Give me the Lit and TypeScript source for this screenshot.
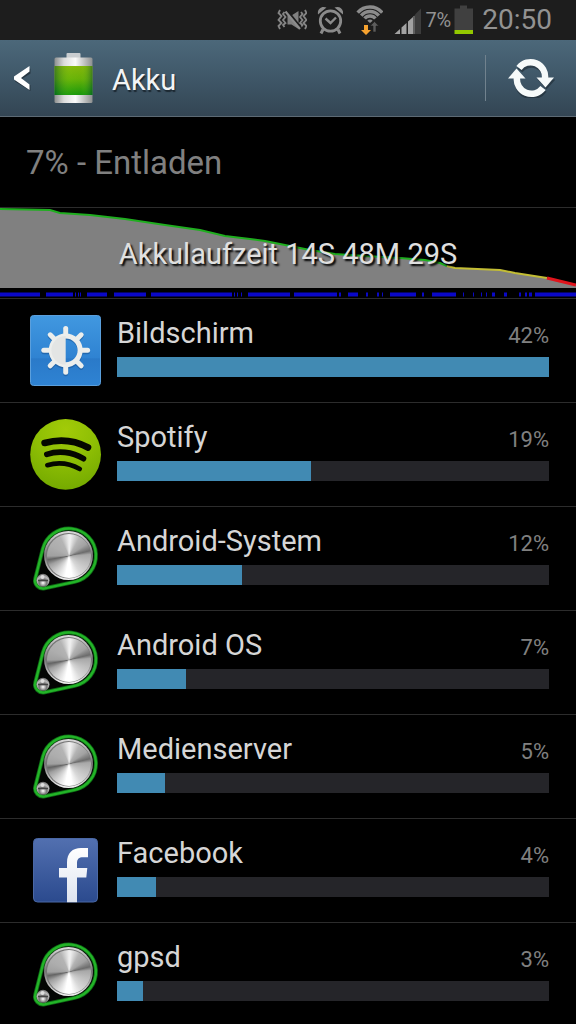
import { LitElement, html, css, svg } from "lit";
import { customElement, property } from "lit/decorators.js";
import { styleMap } from "lit/directives/style-map.js";

type IconName = "display" | "spotify" | "system" | "facebook";

interface Consumer {
  name: string;
  icon: IconName;
  percent: number;
  fill: number;
}

const CONSUMERS: Consumer[] = [
  { name: "Bildschirm", icon: "display", percent: 42, fill: 100 },
  { name: "Spotify", icon: "spotify", percent: 19, fill: 45 },
  { name: "Android-System", icon: "system", percent: 12, fill: 29 },
  { name: "Android OS", icon: "system", percent: 7, fill: 16 },
  { name: "Medienserver", icon: "system", percent: 5, fill: 11 },
  { name: "Facebook", icon: "facebook", percent: 4, fill: 9 },
  { name: "gpsd", icon: "system", percent: 3, fill: 6 },
];

/* Start and end of each period in which the device was awake. */
const AWAKE: [number, number][] = [
  [0, 40], [46, 73], [75, 76], [78, 79], [80, 81], [87, 107], [114, 146],
  [151, 232], [234, 235], [237, 238], [241, 242], [248, 290], [294, 337],
  [339, 341], [348, 358], [366, 368], [377, 379], [382, 383], [390, 416],
  [422, 424], [432, 456], [463, 464], [473, 474], [481, 482], [486, 487],
  [492, 495], [504, 507], [519, 521], [525, 527], [529, 532], [535, 576],
];

@customElement("app-icon")
class AppIcon extends LitElement {
  @property() name: IconName = "system";

  static styles = css`
    :host { display: block; width: 72px; height: 72px; }
    svg { display: block; width: 100%; height: 100%; }
    .metal {
      width: 100%;
      height: 100%;
      border-radius: 50%;
      background: conic-gradient(#eee 0deg, #eee 5deg, #b4b4b4 30deg, #a2a2a2 55deg, #6c6c6c 76deg,
        #a8a8a8 86deg, #bdbdbd 110deg, #d8d8d8 145deg, #fff 172deg, #fff 190deg, #c6c6c6 225deg,
        #a0a0a0 245deg, #646464 260deg, #a0a0a0 270deg, #adadad 300deg, #b4b4b4 335deg, #eee 360deg);
    }
  `;

  private display() {
    return svg`
      <defs>
        <linearGradient id="bg" x2="0" y2="1">
          <stop offset="0" stop-color="#4198e0"/><stop offset=".6" stop-color="#2f83d2"/>
          <stop offset=".62" stop-color="#2a7ac9"/><stop offset="1" stop-color="#2f83d3"/>
        </linearGradient>
      </defs>
      <rect x="0.5" y="0.5" width="70" height="70" rx="3" fill="url(#bg)" stroke="#5b9fdc"/>
      <g transform="translate(0 1.5)" stroke="#174f8d" opacity=".5" stroke-width="5" stroke-linecap="round" fill="none">
        <circle cx="35.7" cy="35.3" r="14.5"/>
        ${this.rays()}
      </g>
      <g stroke="#eceeec" stroke-width="5" stroke-linecap="round" fill="none">
        <circle cx="35.7" cy="35.3" r="14.4"/>
        ${this.rays()}
      </g>
      <path d="M35.7 21v28.600a14.300 14.300 0 0 1 0-28.600z" fill="#e3e5e4"/>`;
  }

  private rays() {
    return [0, 45, 90, 135, 180, 225, 270, 315].map(
      (a) => svg`<path d="M35.7 19v-5.600" transform=${`rotate(${a} 35.7 35.3)`}/>`
    );
  }

  private spotify() {
    return svg`
      <defs>
        <radialGradient id="bg" cx=".5" cy=".15" r=".9">
          <stop offset="0" stop-color="#a2cb08"/><stop offset=".5" stop-color="#8dbe04"/>
          <stop offset="1" stop-color="#72a800"/>
        </radialGradient>
      </defs>
      <circle cx="35.6" cy="35.4" r="35.400" fill="url(#bg)"/>
      <g fill="none" stroke="#050800" stroke-linecap="round">
        <path d="M14.600 24C29 20 45 21.500 58 28.500" stroke-width="6.600"/>
        <path d="M16.800 35.300C28 31.500 42 32.500 53.500 39.700" stroke-width="5.600"/>
        <path d="M17.300 46.200C28 43 39 44 49.800 50" stroke-width="4.600"/>
      </g>`;
  }

  private facebook() {
    return svg`
      <defs>
        <linearGradient id="bg" x2="0" y2="1">
          <stop offset="0" stop-color="#5270b0"/><stop offset="1" stop-color="#2b4a8e"/>
        </linearGradient>
        <linearGradient id="f" x2="0" y2="1">
          <stop offset="0" stop-color="#fff"/><stop offset="1" stop-color="#dde3ef"/>
        </linearGradient>
      </defs>
      <rect x="3.500" y="3.500" width="64" height="63.500" rx="4" fill="url(#bg)" stroke="#4a68a5"/>
      <path d="M37 67.300V42.500H29V33h8V27.500C37 18 42.500 13 51 13h7v9.300h-5c-4 0-6 1.700-6 5.700v5h10.300l-1 9.500H47v24.800z" fill="url(#f)"/>`;
  }

  private system() {
    return svg`
      <defs>
        <radialGradient id="ball" cx=".5" cy=".7" r=".7">
          <stop offset="0" stop-color="#fff"/><stop offset=".4" stop-color="#777"/>
          <stop offset=".7" stop-color="#bbb"/><stop offset="1" stop-color="#666"/>
        </radialGradient>
        <linearGradient id="rim" x2="0" y2="1">
          <stop offset="0" stop-color="#dcdcdc"/><stop offset=".5" stop-color="#777"/>
          <stop offset="1" stop-color="#f4f4f4"/>
        </linearGradient>
      </defs>
      <path d="M12.800 25.800A27 27 0 1 1 44.700 58.900L14.700 65.300A8 8 0 0 1 5.300 55.500Z" fill="#030503" stroke="#0e6a14" stroke-width="4"/>
      <path d="M12.800 25.800A27 27 0 1 1 44.700 58.900L14.700 65.300A8 8 0 0 1 5.300 55.500Z" fill="none" stroke="#23b428" stroke-width="2.400"/>
      <circle cx="38.500" cy="32.500" r="24.500" fill="url(#rim)"/>
      <circle cx="38.500" cy="32.800" r="22.800" fill="#777"/>
      <foreignObject x="16.500" y="11" width="44" height="44"><div xmlns="http://www.w3.org/1999/xhtml" class="metal"></div></foreignObject>
      <circle cx="13" cy="57.300" r="6.500" fill="url(#ball)"/>
      <path d="M8 57.500h10" stroke="#444" stroke-width="1.500"/>
      <circle cx="12.500" cy="54" r="2" fill="#ddd"/>`;
  }

  render() {
    return html`<svg viewBox="0 0 72 72" aria-hidden="true">${this[this.name]()}</svg>`;
  }
}

@customElement("status-bar")
class StatusBar extends LitElement {
  static styles = css`
    :host {
      display: flex;
      align-items: center;
      justify-content: flex-end;
      height: 40px;
      padding-right: 24px;
      background: #1d1d1d;
      color: #929292;
    }
    svg { display: block; flex: none; height: 40px; }
    .vibrate { width: 30px; margin-right: 10px; }
    .alarm { width: 26px; margin-right: 12px; }
    .wifi { width: 28px; margin-right: 10px; }
    .signal { width: 28px; margin-right: 4px; }
    .level { font-size: 20px; line-height: 42px; margin-right: 3px; }
    .battery { width: 20px; margin-right: 8px; }
    .clock { font-size: 28px; line-height: 40px; }
  `;

  render() {
    return html`
      <svg class="vibrate" viewBox="-1 0 30 40" fill="none" stroke="#858585" stroke-width="1.800" aria-hidden="true">
        <path d="M2 10l-1.500 3 3 3-3 4 3 3-3 3 1.500 3M6.500 12l-1.500 2 2.500 3-2.500 3 2.500 3-2.500 2 1.500 2M27 10l1.500 3-3 3 3 4-3 3 3 3-1.500 3M23 12l1.500 2-2.500 3 2.500 3-2.500 3 2.500 2-1.500 2" />
        <path d="M9.500 15.500h4l7-4.500v18l-7-4.500h-4z" fill="#808080" stroke="none" />
        <path d="M9 10.500L23 28" stroke="#1d1d1d" stroke-width="2.500" />
        <path d="M7.500 11.500L22 29" stroke="#8c8c8c" stroke-width="2.200" />
      </svg>
      <svg class="alarm" viewBox="-1 0 26 40" fill="none" stroke="#8b8b8b" aria-hidden="true">
        <circle cx="12.500" cy="21" r="10.200" stroke-width="2.800" />
        <path d="M7.500 18.500l5 4.500 5.500-5.500" stroke-width="2.400" />
        <path d="M5 29.500L3 33.500M20 29.500l2 4" stroke-width="3" />
        <path d="M0 14.500C-1 9 3.500 5.500 8.500 7.500zM25 14.500C26 9 21.500 5.500 16.500 7.500z" fill="#8b8b8b" stroke="none" />
      </svg>
      <svg class="wifi" viewBox="-1 0 28 40" fill="none" stroke="#8b8b8b" stroke-width="3.400" aria-hidden="true">
        <path d="M1.700 12.700A16 16 0 0 1 26.300 12.700M5.200 15.600A11.500 11.500 0 0 1 22.800 15.600M8.600 18.500A7 7 0 0 1 19.400 18.500" />
        <path d="M11.300 20.700A3.500 3.500 0 0 1 16.700 20.700L14 23z" fill="#8b8b8b" stroke="none" />
        <path d="M17 32v-6h-2.800l4.300-4.500 4.300 4.500h-2.800v6z" fill="#5c5c5c" stroke="#1d1d1d" stroke-width=".6" />
        <path d="M8 25h4v5h3l-5 5-5-5h3z" fill="#f6a22f" stroke="none" />
      </svg>
      <svg class="signal" viewBox="-1 0 28 40" aria-hidden="true">
        <path d="M.5 34L6 29v5zM7.500 27.500L12.500 23v11h-5zM14 21.500L19 17v17h-5z" fill="#a2a2a2" />
        <path d="M20.500 15.500V34h-1V16.500z" fill="#a2a2a2" />
        <path d="M21 14.500L27 8.500V34h-6z" fill="#3c3c3c" />
      </svg>
      <span class="level">7%</span>
      <svg class="battery" viewBox="0 0 20 40" aria-hidden="true">
        <path d="M6 5.500h7v3h6V30H.5V8.500H6z" fill="#404040" />
        <path d="M.5 30H19v4H.5z" fill="#93c800" />
      </svg>
      <time class="clock">20:50</time>
    `;
  }
}

@customElement("battery-history")
class BatteryHistory extends LitElement {
  static styles = css`
    :host { display: block; border-bottom: 1px solid #2c2c2c; }
    .chart { display: grid; height: 80px; }
    .curve, .caption { grid-area: 1 / 1; }
    .curve { display: block; width: 100%; height: 80px; }
    .caption {
      margin: 0;
      padding-top: 12px;
      text-align: center;
      font-size: 29px;
      line-height: 68px;
      font-weight: 400;
      color: #e0e0e0;
      text-shadow: 2px 2px 2px #000;
    }
    .awake { display: block; width: 100%; height: 10px; }
  `;

  render() {
    return html`
      <div class="chart">
        <svg class="curve" viewBox="0 0 576 80" preserveAspectRatio="none" aria-hidden="true">
          <path d="M0 1L50 2 60 5 90 7 125 11 165 17 200 22 225 28 250 31 265 33 290 38 310 42 335 46 365 48 400 50 425 52 440 55 447 58 455 60 500 62 515 65 547 70 576 77V80H0Z" fill="#808080" />
          <g fill="none" stroke-width="2">
            <path d="M0 1L50 2 60 5 90 7 125 11 165 17 200 22 225 28 250 31 265 33 290 38 310 42 335 46 365 48 400 50 425 52 440 55 447 58" stroke="#1fae1f" />
            <path d="M447 58L455 60 500 62 515 65 547 70" stroke="#c3bd34" />
            <path d="M547 70L576 77" stroke="#e0141c" stroke-width="3" />
          </g>
        </svg>
        <h2 class="caption">Akkulaufzeit 14S 48M 29S</h2>
      </div>
      <svg class="awake" viewBox="0 0 576 10" preserveAspectRatio="none" aria-hidden="true">
        ${AWAKE.map(([from, to]) => svg`<rect x=${from} y="4.500" width=${to - from} height="4" fill="#0a08c8"/>`)}
      </svg>
    `;
  }
}

@customElement("app-root")
class AppRoot extends LitElement {
  static styles = css`
    :host {
      display: block;
      min-height: 100vh;
      background: #000;
      color: #d6d6d6;
      font-family: Roboto, "Liberation Sans", sans-serif;
    }
    .header {
      display: flex;
      align-items: center;
      box-sizing: border-box;
      height: 77px;
      border-bottom: 1px solid #5d6a74;
      background: linear-gradient(#4c687a, #3f5768 50%, #334553);
    }
    .back {
      display: flex;
      align-items: center;
      gap: 19px;
      flex: 1;
      height: 76px;
      padding: 0 0 0 14px;
      border: 0;
      background: none;
      color: #f2f4f5;
      font: inherit;
      text-align: left;
    }
    .arrow { width: 20px; height: 28px; }
    .battery { width: 40px; height: 52px; }
    .title {
      margin: 0;
      padding-top: 4px;
      font-size: 29px;
      line-height: 40px;
      font-weight: 400;
      text-shadow: 1px 2px 1px #1c2831;
    }
    .refresh {
      display: grid;
      place-items: center;
      width: 91px;
      height: 46px;
      padding: 0;
      border: 0;
      border-left: 1px solid #71828e;
      background: none;
    }
    .refresh svg { width: 48px; height: 40px; }
    .summary {
      margin: 0;
      padding: 1px 26px 0;
      border-bottom: 1px solid #2c2c2c;
      font-size: 33px;
      line-height: 89px;
      color: #808080;
    }
    .list { margin: 0; padding: 0; list-style: none; }
    .row {
      display: flex;
      gap: 15px;
      box-sizing: border-box;
      height: 104px;
      padding: 16px 27px 0 30px;
      border-bottom: 1px solid #2c2c2c;
    }
    .details { flex: 1; min-width: 0; }
    .labels {
      display: flex;
      align-items: baseline;
      justify-content: space-between;
      height: 42px;
      line-height: 37px;
    }
    .name { font-size: 29px; }
    .percent { font-size: 22px; color: #808080; }
    .track { height: 20px; background: #252529; }
    .bar { height: 100%; background: #418ab3; }
  `;

  render() {
    return html`
      <status-bar></status-bar>
      <header class="header">
        <button class="back" aria-label="Akku, zurück">
          <svg class="arrow" viewBox="0 0 20 28" aria-hidden="true">
            <path d="M16.500 4.500V9.500L7 15.500l9.500 5.800V27L1 17.500v-2z" fill="#17222a" opacity=".6" />
            <path d="M15.500 2V7.500L7 14l8.500 6.500V26L0 15.500v-3z" fill="#fff" />
          </svg>
          <svg class="battery" viewBox="-1 0 40 52" aria-hidden="true">
            <defs>
              <linearGradient id="metal">
                <stop offset="0" stop-color="#8d8f8f" /><stop offset=".25" stop-color="#dcdcdc" />
                <stop offset=".55" stop-color="#fafafa" /><stop offset="1" stop-color="#8d8f8f" />
              </linearGradient>
              <linearGradient id="charge" x2="0" y2="1">
                <stop offset="0" stop-color="#7fae08" /><stop offset=".45" stop-color="#5fa805" />
                <stop offset="1" stop-color="#078b0a" />
              </linearGradient>
              <linearGradient id="shade">
                <stop offset="0" stop-color="#043" stop-opacity=".45" /><stop offset=".4" stop-color="#af2" stop-opacity=".15" />
                <stop offset=".7" stop-color="#af2" stop-opacity=".1" /><stop offset="1" stop-color="#043" stop-opacity=".45" />
              </linearGradient>
            </defs>
            <path d="M12.500 6V2q0-1 1-1h12q1 0 1 1v4z" fill="#c9cdd0" />
            <rect x=".5" y="5.500" width="38" height="45.500" rx="1.500" fill="url(#metal)" />
            <rect x=".5" y="14" width="38" height="29" fill="url(#charge)" />
            <rect x=".5" y="14" width="38" height="29" fill="url(#shade)" />
          </svg>
          <h1 class="title">Akku</h1>
        </button>
        <button class="refresh" aria-label="Aktualisieren">
          <svg viewBox="0 0 48 40" aria-hidden="true">
            <g transform="translate(1 2)" fill="#17222a" stroke="#17222a" opacity=".5">
              <path d="M12 10.500A14.500 14.500 0 0 1 38 20" fill="none" stroke-width="6" />
              <path d="M36 30A14.500 14.500 0 0 1 9.500 21" fill="none" stroke-width="6" />
              <path d="M29.500 19.500h18l-9 10z" stroke="none" />
            </g>
            <g fill="#f6fafa" stroke="#f6fafa">
              <path d="M12 10A14.500 14.500 0 0 1 38 20.500" fill="none" stroke-width="6.500" />
              <path d="M29.500 19.500h17.500l-8.500 10z" stroke="none" />
              <path d="M36 30A14.500 14.500 0 0 1 10 19.500" fill="none" stroke-width="6.500" />
              <path d="M18.500 20.500h-17.500l8.500-10z" stroke="none" />
            </g>
          </svg>
        </button>
      </header>
      <main>
        <p class="summary">7% - Entladen</p>
        <battery-history></battery-history>
        <ul class="list">
          ${CONSUMERS.map(
            (c) => html`
              <li class="row">
                <app-icon name=${c.icon}></app-icon>
                <div class="details">
                  <div class="labels">
                    <span class="name">${c.name}</span>
                    <span class="percent">${c.percent}%</span>
                  </div>
                  <div class="track" role="progressbar" aria-label=${c.name} aria-valuenow=${c.percent}>
                    <div class="bar" style=${styleMap({ width: `${c.fill}%` })}></div>
                  </div>
                </div>
              </li>
            `
          )}
        </ul>
      </main>
    `;
  }
}
